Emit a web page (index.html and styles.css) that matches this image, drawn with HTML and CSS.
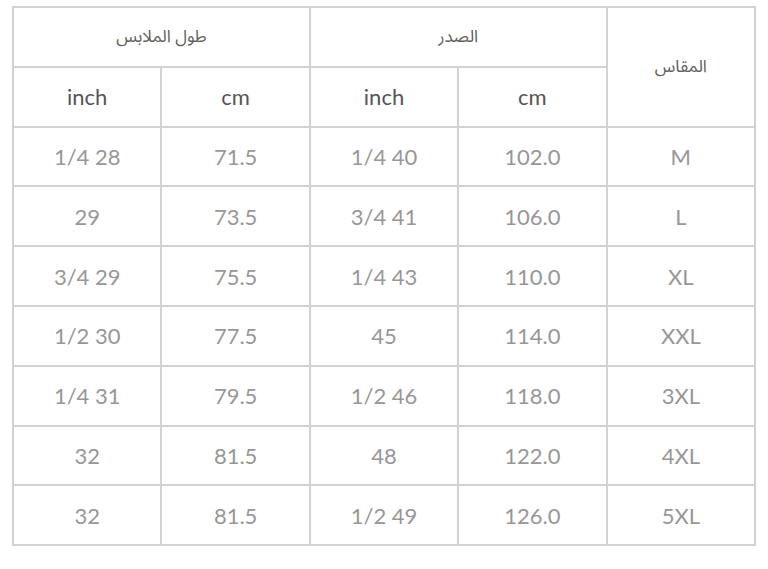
FILE: index.html
```html
<!DOCTYPE html>
<html lang="ar" dir="rtl">
<head>
<meta charset="utf-8">
<link rel="stylesheet" href="styles.css">
</head>
<body>
<table class="size-table">
  <thead>
    <tr>
      <th class="ar" rowspan="2">المقاس</th>
      <th class="ar" colspan="2">الصدر</th>
      <th class="ar" colspan="2">طول الملابس</th>
    </tr>
    <tr>
      <th class="unit">cm</th>
      <th class="unit">inch</th>
      <th class="unit">cm</th>
      <th class="unit">inch</th>
    </tr>
  </thead>
  <tbody>
    <tr><td>M</td><td>102.0</td><td>1/4 40</td><td>71.5</td><td>1/4 28</td></tr>
    <tr><td>L</td><td>106.0</td><td>3/4 41</td><td>73.5</td><td>29</td></tr>
    <tr><td>XL</td><td>110.0</td><td>1/4 43</td><td>75.5</td><td>3/4 29</td></tr>
    <tr><td>XXL</td><td>114.0</td><td>45</td><td>77.5</td><td>1/2 30</td></tr>
    <tr><td>3XL</td><td>118.0</td><td>1/2 46</td><td>79.5</td><td>1/4 31</td></tr>
    <tr><td>4XL</td><td>122.0</td><td>48</td><td>81.5</td><td>32</td></tr>
    <tr><td>5XL</td><td>126.0</td><td>1/2 49</td><td>81.5</td><td>32</td></tr>
  </tbody>
</table>
</body>
</html>
```
FILE: styles.css
```css
html, body {
  margin: 0;
  padding: 0;
  background: #ffffff;
}
body {
  padding: 6px 12px 0 0;
  font-family: "Lato", "Open Sans", "DejaVu Sans", sans-serif;
}
.size-table {
  border-collapse: collapse;
  table-layout: fixed;
  width: 744px;
  direction: rtl;
}
.size-table th,
.size-table td {
  border: 2px solid #d2d2d2;
  height: 57.8px;
  padding: 0;
  text-align: center;
  vertical-align: middle;
  font-weight: normal;
}
.size-table td {
  color: #979797;
  font-size: 22px;
  direction: ltr;
}
.size-table th.unit {
  color: #555555;
  font-size: 22px;
}
.size-table th.ar {
  color: #606060;
  font-family: "Noto Sans Arabic", "Noto Naskh Arabic", "DejaVu Sans", sans-serif;
  font-size: 17px;
  font-weight: normal;
}
```
